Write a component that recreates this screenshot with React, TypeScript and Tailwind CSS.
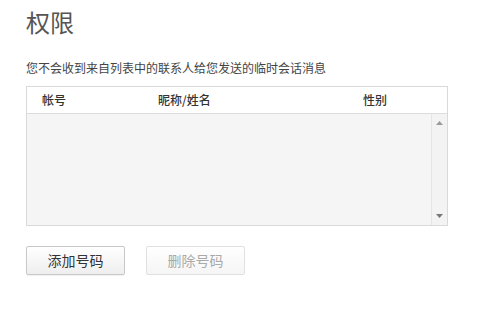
import React from "react";

export default function App() {
  const font = { fontFamily: '"Microsoft YaHei", "Noto Sans CJK SC", "Noto Sans", sans-serif' };
  return (
    <div className="w-[496px] h-[310px] bg-white overflow-hidden" style={font}>
      <div className="pl-[26px] pt-[5px]">
        <h1 className="text-[24px] leading-[34px] text-[#555] font-normal">权限</h1>
        <p className="mt-[21px] text-[12px] leading-[16px] text-[#444]">您不会收到来自列表中的联系人给您发送的临时会话消息</p>
        <div className="mt-[10px] w-[422px] h-[140px] border border-[#d9d9d9] flex flex-col">
          <div className="h-[27px] flex items-center border-b border-[#dcdcdc] bg-white text-[12px] text-[#333] font-medium">
            <div className="w-[131px] pl-[15px]">帐号</div>
            <div className="w-[205px]">昵称/姓名</div>
            <div>性别</div>
          </div>
          <div className="flex-1 flex bg-[#f5f5f5]">
            <div className="flex-1" />
            <div className="w-[16px] border-l border-[#e6e6e6] bg-[#f3f3f3] flex flex-col items-center justify-between py-[7px]">
              <svg width="7" height="4" viewBox="0 0 7 4"><path d="M0 4 L3.5 0 L7 4 Z" fill="#9a9a9a" /></svg>
              <svg width="7" height="4" viewBox="0 0 7 4"><path d="M0 0 L3.5 4 L7 0 Z" fill="#777" /></svg>
            </div>
          </div>
        </div>
        <div className="mt-[20px] flex gap-[21px]">
          <button className="w-[99px] h-[29px] rounded-[2px] border border-[#c8c8c8] bg-gradient-to-b from-white to-[#eeeeee] text-[14px] text-[#333] shadow-[0_1px_1px_rgba(0,0,0,0.06)]">添加号码</button>
          <button className="w-[99px] h-[29px] rounded-[2px] border border-[#e0e0e0] bg-gradient-to-b from-white to-[#f5f5f5] text-[14px] text-[#aaa]">删除号码</button>
        </div>
      </div>
    </div>
  );
}
